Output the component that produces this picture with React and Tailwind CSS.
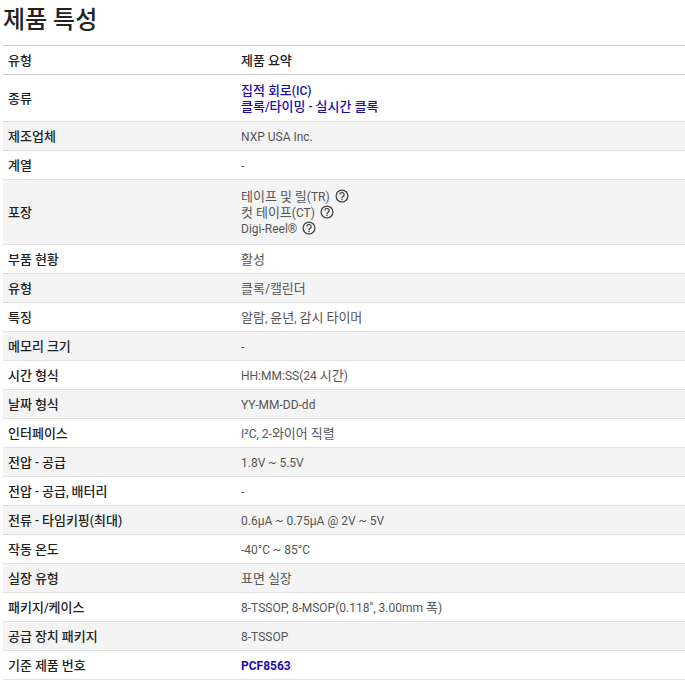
import React from "react";

const rows = [
  { label: "종류", links: ["집적 회로(IC)", "클록/타이밍 - 실시간 클록"], h: "h-[47px]" },
  { label: "제조업체", value: "NXP USA Inc.", gray: true },
  { label: "계열", value: "-" },
  {
    label: "포장",
    gray: true,
    h: "h-[65px]",
    lines: ["테이프 및 릴(TR)", "컷 테이프(CT)", "Digi-Reel®"],
  },
  { label: "부품 현황", value: "활성" },
  { label: "유형", value: "클록/캘린더", gray: true },
  { label: "특징", value: "알람, 윤년, 감시 타이머" },
  { label: "메모리 크기", value: "-", gray: true },
  { label: "시간 형식", value: "HH:MM:SS(24 시간)" },
  { label: "날짜 형식", value: "YY-MM-DD-dd", gray: true },
  { label: "인터페이스", value: "I²C, 2-와이어 직렬" },
  { label: "전압 - 공급", value: "1.8V ~ 5.5V", gray: true },
  { label: "전압 - 공급, 배터리", value: "-" },
  { label: "전류 - 타임키핑(최대)", value: "0.6µA ~ 0.75µA @ 2V ~ 5V", gray: true },
  { label: "작동 온도", value: "-40°C ~ 85°C" },
  { label: "실장 유형", value: "표면 실장", gray: true },
  { label: "패키지/케이스", value: "8-TSSOP, 8-MSOP(0.118\", 3.00mm 폭)" },
  { label: "공급 장치 패키지", value: "8-TSSOP", gray: true },
  { label: "기준 제품 번호", link: "PCF8563" },
];

// 한글 글자만 조금 크게
function Ko({ text }) {
  return text.split(/([가-힣]+)/).map((part, i) =>
    /[가-힣]/.test(part) ? (
      <span key={i} className="text-[13px]">{part}</span>
    ) : (
      part
    )
  );
}

function HelpIcon() {
  return (
    <svg width="14" height="14" viewBox="0 0 14 14" fill="none" className="ml-[5px] inline-block align-[-2px]">
      <circle cx="7" cy="7" r="5.9" stroke="#444" strokeWidth="1.3" />
      <path d="M4.9 5.6a2.1 2.1 0 1 1 3.3 1.7c-.8.5-1.2.9-1.2 1.6" stroke="#444" strokeWidth="1.3" />
      <rect x="6.3" y="9.6" width="1.4" height="1.4" fill="#444" />
    </svg>
  );
}

export default function App() {
  return (
    <div className="h-[689px] w-[685px] overflow-hidden bg-white pl-[3px] font-['Roboto','Noto_Sans_CJK_KR',sans-serif] text-[12px] leading-[16px] text-[#333]">
      <h2 className="h-[45px] pt-[3px] text-[24px] leading-[34px] font-medium text-[#222]">제품 특성</h2>
      <table className="w-[682px] table-fixed border-collapse">
        <thead>
          <tr className="h-[29px] border-y border-[#ccc] text-left text-[#222]">
            <th className="w-[233px] p-0 pt-[1px] pl-[5px] font-medium"><Ko text="유형" /></th>
            <th className="p-0 pt-[1px] pl-[5px] font-medium"><Ko text="제품 요약" /></th>
          </tr>
        </thead>
        <tbody>
          {rows.map((row, i) => (
            <tr key={i} className={`border-b border-[#e0e0e0] ${row.h || "h-[29px]"} ${row.gray ? "bg-[#f4f4f4]" : ""}`}>
              <td className="p-0 pt-[1px] pl-[5px] font-medium text-[#222]"><Ko text={row.label} /></td>
              <td className="p-0 pt-[1px] pl-[5px] text-[#555]">
                {row.value && <Ko text={row.value} />}
                {row.links &&
                  row.links.map((l) => (
                    <a key={l} className="block leading-[15px] font-medium text-[#1a0dab]"><Ko text={l} /></a>
                  ))}
                {row.lines &&
                  row.lines.map((l) => (
                    <div key={l}>
                      <Ko text={l} />
                      <HelpIcon />
                    </div>
                  ))}
                {row.link && <a className="font-bold text-[#1a0dab]">{row.link}</a>}
              </td>
            </tr>
          ))}
        </tbody>
      </table>
    </div>
  );
}
